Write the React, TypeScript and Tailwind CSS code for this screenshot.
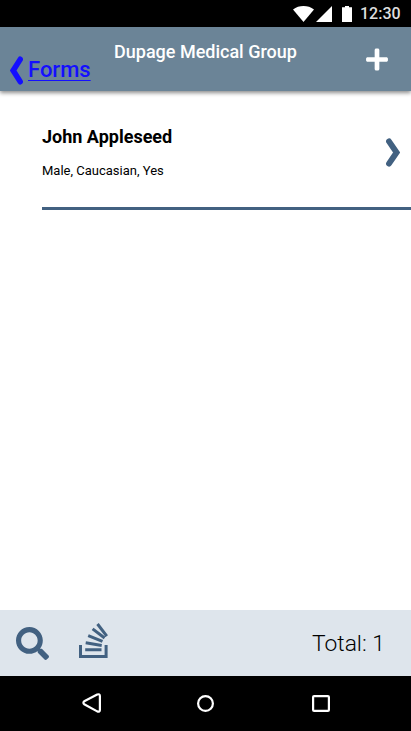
import { FaPlus, FaSearch } from "react-icons/fa";

function Chevron({ className }: { className: string }) {
  return (
    <svg viewBox="0 0 14 29" preserveAspectRatio="none" className={className} fill="none" stroke="currentColor" strokeWidth="5.8" strokeLinecap="round">
      <path d="M3 3.4 10.6 14.5 3 25.6" />
    </svg>
  );
}

function StackIcon({ className }: { className: string }) {
  return (
    <svg viewBox="0 0 30 35" className={className} fill="none" stroke="currentColor" strokeWidth="3">
      <path d="M1.5 22v11.5h25.6V22" />
      <path d="M6.2 26.8h16.3M6.7 19.8l16 2.6M9.2 12.6l14.3 5.8M13.6 5.9l12 9.1M18.5 1l9.3 12.2" />
    </svg>
  );
}

function StatusBar() {
  return (
    <div className="flex h-[27px] shrink-0 items-start bg-black pl-[293px] text-white">
      <svg className="mt-[6px] h-4 w-[21px] shrink-0" viewBox="0 0 21 16" fill="currentColor">
        <path d="M0 3.4C6-1.1 15-1.1 21 3.4L10.5 16z" />
      </svg>
      <svg className="ml-[2px] mt-[6px] h-4 w-4 shrink-0" viewBox="0 0 16 16" fill="currentColor">
        <path d="M16 0v16H0z" />
      </svg>
      <svg className="ml-[10px] mt-[6px] h-4 w-[10px] shrink-0" viewBox="0 0 10 16" fill="currentColor">
        <path d="M3 0h4v1.3h3V16H0V1.3h3z" />
      </svg>
      <span className="ml-[8px] mt-[3px] text-[16px] font-medium leading-[21px] text-[#dedede]">12:30</span>
    </div>
  );
}

function Header() {
  return (
    <header className="flex h-16 shrink-0 items-start bg-[#6b8497] shadow-[0_2px_4px_rgba(0,0,0,0.45)]">
      <a className="ml-[10px] mt-[29px] flex w-[104px] text-[#140fff]">
        <Chevron className="h-[29px] w-[13px] rotate-180" />
        <span className="ml-[5px] text-[22px] font-medium leading-[28px] underline decoration-1 underline-offset-[3px]">Forms</span>
      </a>
      <h1 className="mt-[14px] w-[252px] whitespace-nowrap text-[18px] font-medium leading-[22px] text-white">
        Dupage Medical Group
      </h1>
      <FaPlus className="mt-[20px] h-[25px] w-[22px] text-white" />
    </header>
  );
}

export default function App() {
  return (
    <div className="flex h-[731px] w-[411px] flex-col overflow-hidden bg-white font-['Roboto',sans-serif] text-black">
      <StatusBar />
      <Header />
      <main className="flex-1">
        <div className="ml-[42px] flex h-[119px] justify-between border-b-[3px] border-[#426181] pr-[11px]">
          <div className="pt-[35px]">
            <h2 className="text-[18px] font-bold leading-[22px]">John Appleseed</h2>
            <p className="mt-[14px] text-[13px] leading-[18px]">Male, Caucasian, Yes</p>
          </div>
          <Chevron className="mt-[47px] h-[29px] w-[14px] text-[#426181]" />
        </div>
      </main>
      <footer className="flex h-[66px] shrink-0 items-start bg-[#dee5ec] pl-4 text-[#426181]">
        <FaSearch className="mt-[17px] h-[33px] w-[33px]" />
        <StackIcon className="ml-[30px] mt-[13px] h-[35px] w-[30px]" />
        <span className="ml-[203px] mt-[20px] whitespace-nowrap text-[22.8px] font-light leading-[28px] text-black">
          Total: 1
        </span>
      </footer>
      <nav className="flex h-[55px] shrink-0 items-start bg-black pl-[82px] pt-[17px] text-white">
        <svg className="h-5 w-5" viewBox="0 0 20 20" fill="none" stroke="currentColor" strokeWidth="2.2" strokeLinejoin="round">
          <path d="M15.2 1.5 2.2 8.3Q.6 9.7 2.2 11.2l13 7.2Q17.9 19.2 17.9 17V3Q17.9.6 15.2 1.5z" />
        </svg>
        <svg className="ml-[94px] mt-[1px] h-[18px] w-[18px]" viewBox="0 0 18 18" fill="none" stroke="currentColor" strokeWidth="2.2">
          <circle cx="9.5" cy="9.5" r="7.4" />
        </svg>
        <svg className="ml-[98px] mt-[1px] h-[18px] w-[18px]" viewBox="0 0 18 18" fill="none" stroke="currentColor" strokeWidth="2.2">
          <rect x="1.1" y="2.1" width="15.8" height="14.8" rx="1" />
        </svg>
      </nav>
    </div>
  );
}
